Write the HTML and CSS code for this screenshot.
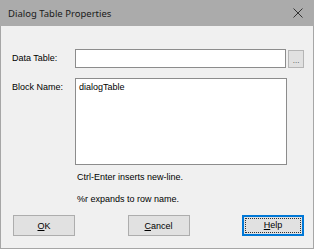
FILE: index.html
```html
<!DOCTYPE html>
<html lang="en">
<head>
    <meta charset="UTF-8">
    <title>Dialog Table Properties</title>
    <link rel="stylesheet" href="styles.css">
</head>
<body>
<div class="window">
    <div class="titlebar">
        <span class="title">Dialog Table Properties</span>
        <svg class="close" width="10" height="10" viewBox="0 0 10 10">
            <path d="M0.5 0.5 L9.5 9.5 M9.5 0.5 L0.5 9.5" stroke="#333" stroke-width="1" fill="none"/>
        </svg>
    </div>
    <div class="content">
        <div class="row">
            <label class="label" for="dataTable">Data Table:</label>
            <input type="text" id="dataTable" class="field">
            <button type="button" class="browse">...</button>
        </div>
        <div class="row">
            <label class="label label-top" for="blockName">Block Name:</label>
            <textarea id="blockName" class="area">dialogTable</textarea>
        </div>
        <div class="hint first">Ctrl-Enter inserts new-line.</div>
        <div class="hint">%r expands to row name.</div>
        <div class="buttons">
            <button type="button" class="btn"><u>O</u>K</button>
            <button type="button" class="btn"><u>C</u>ancel</button>
            <button type="button" class="btn focused"><span class="focus-ring"><u>H</u>elp</span></button>
        </div>
    </div>
</div>
</body>
</html>
```

FILE: styles.css
```css
html, body {
    margin: 0;
    padding: 0;
    background: #ffffff;
}
body {
    font-family: "Liberation Sans", Arial, sans-serif;
    font-size: 9px;
    color: #000;
}
.window {
    width: 314px;
    height: 249px;
    box-sizing: border-box;
    border: 1px solid #a6a6a6;
    border-top: none;
    background: #f0f0f0;
}
.titlebar {
    height: 26px;
    background: #ababab;
    display: flex;
    align-items: center;
    justify-content: space-between;
    padding: 0 8px 0 8px;
    margin: 0 -1px;
}
.title {
    font-family: "Noto Sans", sans-serif;
    font-size: 9.5px;
    color: #1a1a1a;
}
.close {
    margin-right: 3px;
}
.content {
    padding: 23px 9px 0 11px;
}
.row {
    display: flex;
    align-items: flex-start;
}
.row + .row {
    margin-top: 10px;
}
.label {
    width: 63px;
    line-height: 19px;
}
.label-top {
    line-height: 18px;
}
.field {
    width: 212px;
    height: 19px;
    box-sizing: border-box;
    border: 1px solid #8c8c8c;
    background: #fff;
    margin: 0;
    padding: 0 3px;
    font: inherit;
}
.browse {
    width: 16px;
    height: 18px;
    margin: 1px 0 0 2px;
    padding: 0;
    box-sizing: border-box;
    border: 1px solid #b5b5b5;
    background: #e1e1e1;
    font: inherit;
    font-size: 8px;
    line-height: 20px;
    color: #444;
}
.area {
    width: 212px;
    height: 87px;
    box-sizing: border-box;
    border: 1px solid #8c8c8c;
    background: #fff;
    margin: 0;
    padding: 3px 3px;
    font: inherit;
    line-height: 11px;
    resize: none;
    overflow: hidden;
}
.hint {
    margin-left: 65px;
    line-height: 11px;
}
.hint.first {
    margin-top: 7px;
}
.hint + .hint {
    margin-top: 11px;
}
.buttons {
    display: flex;
    justify-content: space-between;
    margin: 10px 0 0 1px;
}
.btn {
    width: 62px;
    height: 21px;
    box-sizing: border-box;
    border: 1px solid #adadad;
    background: #e1e1e1;
    font: inherit;
    color: #000;
    padding: 0;
}
.btn.focused {
    border: 1px solid #0078d7;
    box-shadow: inset 0 0 0 1px #0078d7;
    padding: 2px;
}
.focus-ring {
    display: block;
    height: 100%;
    box-sizing: border-box;
    border: 1px dotted #333;
    line-height: 13px;
}
```
